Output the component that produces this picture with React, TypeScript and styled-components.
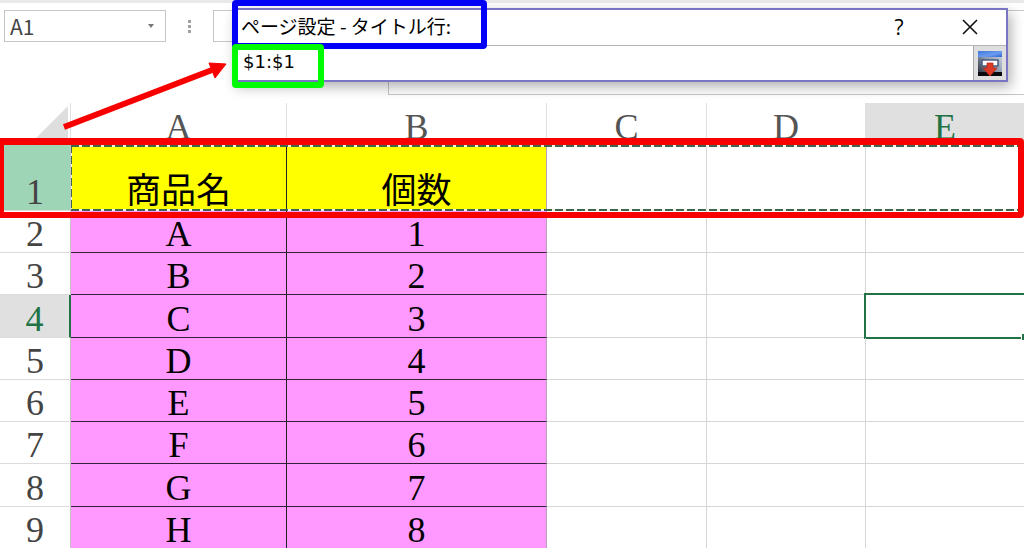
import React from "react";
import styled, { createGlobalStyle, css } from "styled-components";

const GlobalStyle = createGlobalStyle`
  *, *::before, *::after { box-sizing: border-box; }
  body {
    margin: 0;
    background: #fff;
    overflow: hidden;
    font-family: "Noto Sans CJK JP", sans-serif;
  }
  input, button { font: inherit; color: inherit; margin: 0; padding: 0; border: 0; background: none; outline: 0; }
`;

const Page = styled.main`
  position: relative;
`;

const Toolbar = styled.header`
  display: flex;
  align-items: flex-start;
  height: 103px;
  padding: 7px 0 0 4px;
  border-top: 3px solid #e9e9e9;
`;

const NameBox = styled.div`
  display: flex;
  width: 162px;
  height: 32px;
  border: 1px solid #c6c6c6;
`;

const NameInput = styled.input`
  flex: 1;
  min-width: 0;
  padding-left: 5px;
  font-size: 21px;
  color: #444;
`;

const DropButton = styled.button`
  display: grid;
  place-items: center;
  width: 28px;
`;

const Grip = styled.svg`
  flex: none;
  margin: 9px 20px 0 21px;
`;

const FunctionBox = styled.div`
  width: 175px;
  height: 32px;
  border: 1px solid #c6c6c6;
  border-right: 0;
`;

const FormulaInput = styled.textarea`
  flex: 1;
  min-width: 0;
  height: 85px;
  margin: 0;
  border: 1px solid #c6c6c6;
  border-right: 0;
  background: #fff;
  resize: none;
  outline: 0;
`;

const Dialog = styled.section`
  position: absolute;
  top: 8px;
  left: 233px;
  right: 16px;
  border: 2px solid #7a74c4;
  background: #fff;
  box-shadow: 3px 5px 12px rgba(0, 0, 0, 0.3);
`;

const TitleBar = styled.div`
  display: flex;
  align-items: flex-start;
  height: 35px;
  padding-right: 22px;
`;

const Title = styled.h1`
  flex: 1;
  margin: 0;
  padding-left: 6px;
  font-size: 19px;
  font-weight: 400;
  line-height: 32px;
  color: #000;
`;

const TitleButton = styled.button`
  display: grid;
  place-items: center;
  width: 28px;
  height: 34px;
  margin-left: 43px;
  font-family: "Open Sans", sans-serif;
  font-size: 21px;
  line-height: 34px;
`;

const RangeRow = styled.div`
  display: flex;
  height: 35px;
  border-top: 1px solid #b4b4b4;
`;

const RangeInput = styled.input`
  flex: 1;
  min-width: 0;
  padding: 0 0 4px 8px;
  font-family: "DejaVu Sans", sans-serif;
  font-size: 18px;
`;

const RangeButton = styled.button`
  display: grid;
  place-items: center;
  width: 33px;
  border-left: 1px solid #aaa;
  background: #dedede;
`;

const Marker = styled.div`
  position: absolute;
  border: 6px solid;
  border-radius: 4px;
  pointer-events: none;
`;

const TitleMarker = styled(Marker)`
  top: -10px;
  left: -3px;
  width: 255px;
  height: 49px;
  border-color: #0000f8;
`;

const RangeMarker = styled(Marker)`
  top: 34px;
  left: -3px;
  width: 92px;
  height: 44px;
  border-color: #00fc00;
`;

const Sheet = styled.div`
  position: relative;
`;

const RowMarker = styled(Marker)`
  top: 35px;
  left: -1px;
  right: 0;
  height: 80px;
  border-color: #f80000;
  border-width: 7px 6px 6px 5px;
  border-radius: 0 4px 4px 0;
`;

const Ants = styled.div`
  position: absolute;
  top: 42px;
  left: 71px;
  right: 6px;
  height: 66px;
  background:
    repeating-linear-gradient(90deg, #3c6650 0 8px, #f4f4e0 8px 11px) top / 100% 2px no-repeat,
    repeating-linear-gradient(90deg, #3c6650 0 8px, #f4f4e0 8px 11px) bottom / 100% 2px no-repeat,
    repeating-linear-gradient(180deg, #3c6650 0 8px, #f4f4e0 8px 11px) left / 1px 100% no-repeat;
`;

const Grid = styled.table`
  width: 100%;
  table-layout: fixed;
  border-collapse: separate;
  border-spacing: 0;
  font-family: "Liberation Serif", "Noto Sans CJK JP", serif;
  font-size: 36px;
  line-height: 36px;
  text-align: center;

  th, td { padding: 0; vertical-align: bottom; font-weight: 400; }
  tr > :last-child { border-right: 0; }
`;

const Col = styled.col<{ $w?: number }>`
  ${(p) => p.$w && `width: ${p.$w}px;`}
`;

const Row = styled.tr<{ $h: number }>`
  height: ${(p) => p.$h}px;
`;

const activeHeading = css`
  background: #e0e0e0;
  color: #217346;
`;

const ColumnHeading = styled.th<{ $active?: boolean }>`
  border-right: 1px solid #e0e0e0;
  color: #555;
  ${(p) => p.$active && activeHeading}
`;

const Corner = styled.td`
  border-right: 1px solid #e0e0e0;

  svg { display: block; margin-left: 28px; }
`;

const RowHeading = styled.th<{ $active?: boolean; $copied?: boolean }>`
  border-right: 1px solid #c4c4c4;
  border-bottom: 1px solid #dcdcdc;
  color: #444;
  ${(p) => p.$copied && "background: #9fd5b7;"}
  ${(p) => p.$active && activeHeading}
  ${(p) => p.$active && "border-right: 2px solid #217346;"}
`;

const Cell = styled.td<{ $fill?: string; $last?: boolean }>`
  position: relative;
  border-right: 1px solid #d6d6d6;
  border-bottom: 1px solid #d6d6d6;
  color: #000;
  ${(p) =>
    p.$fill &&
    css`
      background: ${p.$fill};
      border-bottom-color: #33203a;
      border-right-color: ${p.$last ? "#b8a0b8" : "#222"};
    `}
`;

const HeadCell = styled(Cell)`
  font-size: 35px;
`;

const Selection = styled.div`
  position: absolute;
  inset: -2px 0 -2px -2px;
  border: 2px solid #217346;
  border-right: 0;

  &::after {
    content: "";
    position: absolute;
    right: 0;
    bottom: -3px;
    width: 3px;
    height: 7px;
    background: #217346;
    border: solid #fff;
    border-width: 1px 0 0 1px;
  }
`;

const YELLOW = "#ffff00";
const PINK = "#ff99ff";

const columns = ["A", "B", "C", "D", "E"];
const rows = [
  { n: 1, h: 66, item: "商品名", count: "個数" },
  { n: 2, h: 42, item: "A", count: "1" },
  { n: 3, h: 42, item: "B", count: "2" },
  { n: 4, h: 43, item: "C", count: "3" },
  { n: 5, h: 42, item: "D", count: "4" },
  { n: 6, h: 42, item: "E", count: "5" },
  { n: 7, h: 42, item: "F", count: "6" },
  { n: 8, h: 43, item: "G", count: "7" },
  { n: 9, h: 42, item: "H", count: "8" },
];

const Arrow = styled.svg`
  position: absolute;
  top: 58px;
  left: 58px;
  pointer-events: none;
`;

function RestoreIcon() {
  return (
    <svg width="24" height="25" viewBox="0 0 24 25" aria-hidden="true">
      <defs>
        <linearGradient id="bar" x1="0" y1="0" x2="1" y2="1">
          <stop offset="0" stopColor="#3f78dc" />
          <stop offset="0.6" stopColor="#6c9cf0" />
          <stop offset="1" stopColor="#2f62cc" />
        </linearGradient>
        <linearGradient id="body" x1="1" y1="0" x2="0" y2="1">
          <stop offset="0" stopColor="#d3dbe6" />
          <stop offset="0.5" stopColor="#8b98ac" />
          <stop offset="1" stopColor="#1c2230" />
        </linearGradient>
      </defs>
      <rect width="24" height="25" fill="url(#body)" />
      <rect width="24" height="6" fill="url(#bar)" />
      <rect y="21" width="24" height="4" fill="#080a10" />
      <rect x="4" y="9" width="16" height="6" fill="#fff" stroke="#4a5c80" strokeWidth="1.5" />
      <path d="M9 12h6v5h4l-7 8-7-8h4z" fill="#dc3a24" stroke="#b82a18" strokeWidth="0.8" />
    </svg>
  );
}

export default function App() {
  return (
    <Page>
      <GlobalStyle />
      <Toolbar>
        <NameBox>
          <NameInput aria-label="名前ボックス" defaultValue="A1" />
          <DropButton aria-label="名前の一覧">
            <svg width="6" height="4" viewBox="0 0 6 4">
              <path d="M0 0h6L3 4z" fill="#777" />
            </svg>
          </DropButton>
        </NameBox>
        <Grip width="6" height="14" viewBox="0 0 6 14" aria-hidden="true">
          <path d="M1 1h3v3H1zM1 6h3v3H1zM1 11h3v3H1z" fill="#a0a0a0" />
        </Grip>
        <FunctionBox />
        <FormulaInput aria-label="数式バー" />
      </Toolbar>

      <Sheet>
        <Grid>
          <colgroup>
            <Col $w={71} />
            <Col $w={216} />
            <Col $w={260} />
            <Col $w={160} />
            <Col $w={159} />
            <Col />
          </colgroup>
          <thead>
            <Row $h={42}>
              <Corner>
                <svg width="40" height="39" viewBox="0 0 40 39" aria-hidden="true">
                  <path d="M40 0v39H1z" fill="#dedede" />
                </svg>
              </Corner>
              {columns.map((c) => (
                <ColumnHeading key={c} scope="col" $active={c === "E"}>
                  {c}
                </ColumnHeading>
              ))}
            </Row>
          </thead>
          <tbody>
            {rows.map((r) => {
              const Filled = r.n === 1 ? HeadCell : Cell;
              const fill = r.n === 1 ? YELLOW : PINK;
              return (
                <Row key={r.n} $h={r.h}>
                  <RowHeading scope="row" $active={r.n === 4} $copied={r.n === 1}>
                    {r.n}
                  </RowHeading>
                  <Filled $fill={fill}>{r.item}</Filled>
                  <Filled $fill={fill} $last>
                    {r.count}
                  </Filled>
                  <Cell />
                  <Cell />
                  <Cell>{r.n === 4 && <Selection />}</Cell>
                </Row>
              );
            })}
          </tbody>
        </Grid>
        <Ants />
        <RowMarker />
      </Sheet>

      <Dialog role="dialog" aria-labelledby="dialog-title">
        <TitleBar>
          <Title id="dialog-title">ページ設定 - タイトル行:</Title>
          <TitleButton aria-label="ヘルプ">?</TitleButton>
          <TitleButton aria-label="閉じる">
            <svg width="16" height="16" viewBox="0 0 16 16">
              <path d="M1 1l14 14M15 1L1 15" stroke="#111" strokeWidth="1.6" />
            </svg>
          </TitleButton>
        </TitleBar>
        <RangeRow>
          <RangeInput aria-labelledby="dialog-title" defaultValue="$1:$1" />
          <RangeButton aria-label="ダイアログを元に戻す">
            <RestoreIcon />
          </RangeButton>
        </RangeRow>
        <TitleMarker />
        <RangeMarker />
      </Dialog>

      <Arrow width="172" height="76" viewBox="0 0 172 76" aria-hidden="true">
        <path d="M6 69L154 12" stroke="#f80000" strokeWidth="6" />
        <path d="M151 5L168 6L157 20Z" fill="#f80000" stroke="#f80000" strokeWidth="1" strokeLinejoin="round" />
      </Arrow>
    </Page>
  );
}
